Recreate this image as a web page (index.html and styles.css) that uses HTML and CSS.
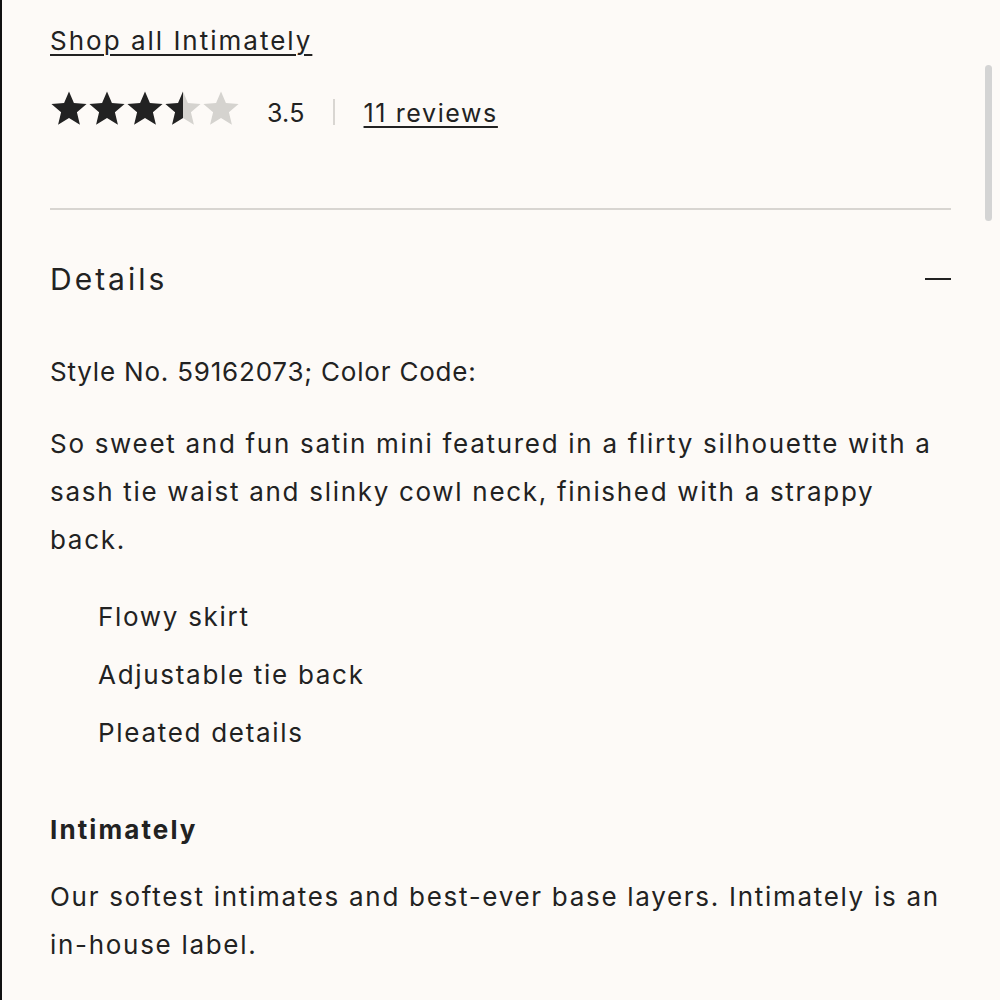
FILE: index.html
```html
<!DOCTYPE html>
<html>
<head>
<meta charset="utf-8">
<link rel="stylesheet" href="styles.css">
</head>
<body>
<div class="page">
  <a class="shop-link" href="#">Shop all Intimately</a>
  <div class="rating">
    <div class="stars">
      <svg class="star" viewBox="0 0 24 24"><path d="M12 1.5l3.1 7.4 8 .6-6.1 5.2 1.9 7.8L12 18.3l-6.9 4.2L7 14.7.9 9.5l8-.6z" fill="#222"/></svg>
      <svg class="star" viewBox="0 0 24 24"><path d="M12 1.5l3.1 7.4 8 .6-6.1 5.2 1.9 7.8L12 18.3l-6.9 4.2L7 14.7.9 9.5l8-.6z" fill="#222"/></svg>
      <svg class="star" viewBox="0 0 24 24"><path d="M12 1.5l3.1 7.4 8 .6-6.1 5.2 1.9 7.8L12 18.3l-6.9 4.2L7 14.7.9 9.5l8-.6z" fill="#222"/></svg>
      <svg class="star" viewBox="0 0 24 24"><defs><clipPath id="half"><rect x="0" y="0" width="12" height="24"/></clipPath></defs><path d="M12 1.5l3.1 7.4 8 .6-6.1 5.2 1.9 7.8L12 18.3l-6.9 4.2L7 14.7.9 9.5l8-.6z" fill="#d5d3cf"/><path d="M12 1.5l3.1 7.4 8 .6-6.1 5.2 1.9 7.8L12 18.3l-6.9 4.2L7 14.7.9 9.5l8-.6z" fill="#222" clip-path="url(#half)"/></svg>
      <svg class="star" viewBox="0 0 24 24"><path d="M12 1.5l3.1 7.4 8 .6-6.1 5.2 1.9 7.8L12 18.3l-6.9 4.2L7 14.7.9 9.5l8-.6z" fill="#d5d3cf"/></svg>
    </div>
    <span class="score">3.5</span>
    <span class="sep"></span>
    <a class="reviews" href="#">11 reviews</a>
  </div>
  <hr class="divider">
  <div class="accordion-head">
    <h2 class="accordion-title">Details</h2>
    <span class="minus"></span>
  </div>
  <div class="details">
    <p class="style-no">Style No. 59162073; Color Code:</p>
    <p class="desc">So sweet and fun satin mini featured in a flirty silhouette with a sash tie waist and slinky cowl neck, finished with a strappy back.</p>
    <ul class="features">
      <li>Flowy skirt</li>
      <li>Adjustable tie back</li>
      <li>Pleated details</li>
    </ul>
    <h3 class="brand">Intimately</h3>
    <p class="desc">Our softest intimates and best-ever base layers. Intimately is an in-house label.</p>
  </div>
</div>
<div class="scrollbar"></div>
</body>
</html>
```

FILE: styles.css
```css
html, body {
  margin: 0;
  padding: 0;
}
body {
  background: #fdfaf7;
  border-left: 2px solid #111;
  min-height: 1000px;
  box-sizing: border-box;
  font-family: "Inter", "Liberation Sans", sans-serif;
  color: #222;
  overflow: hidden;
}
.page {
  padding: 24px 49px 0 48px;
  width: 901px;
}
.shop-link {
  display: inline-block;
  font-size: 26px;
  letter-spacing: 2px;
  color: #222;
  text-decoration: underline;
  text-underline-offset: 4px;
  text-decoration-thickness: 2px;
  line-height: 34px;
}
.rating {
  display: flex;
  align-items: center;
  margin-top: 30px;
  height: 40px;
}
.stars {
  display: flex;
}
.star {
  width: 38px;
  height: 38px;
  display: block;
}
.score {
  font-size: 25px;
  margin-left: 27px;
  letter-spacing: 0.2px;
  padding-top: 9px;
}
.sep {
  width: 2px;
  height: 26px;
  background: #d9d6d2;
  margin: 8px 29px 0 28px;
}
.reviews {
  font-size: 25px;
  color: #222;
  letter-spacing: 1.6px;
  text-decoration: underline;
  text-underline-offset: 4px;
  text-decoration-thickness: 2px;
  padding-top: 9px;
}
.divider {
  border: 0;
  height: 2px;
  background: #d8d5d1;
  margin: 80px 0 0 0;
}
.accordion-head {
  display: flex;
  justify-content: space-between;
  align-items: center;
  height: 138px;
}
.accordion-title {
  margin: 0;
  font-weight: 400;
  font-size: 30px;
  letter-spacing: 3px;
}
.minus {
  width: 26px;
  height: 2px;
  background: #222;
}
.details {
  padding-right: 10px;
}
.details p {
  margin: 0;
}
.style-no,
.desc {
  font-size: 26px;
  line-height: 48px;
  letter-spacing: 1.7px;
}
.style-no {
  letter-spacing: 0.8px;
  margin-bottom: 24px !important;
}
.features {
  list-style: none;
  margin: 24px 0 0 0;
  padding: 0 0 0 48px;
}
.features li {
  font-size: 26px;
  line-height: 58px;
  letter-spacing: 1.7px;
}
.brand {
  margin: 44px 0 19px 0;
  font-size: 26px;
  font-weight: 700;
  letter-spacing: 2.1px;
  line-height: 48px;
}
.scrollbar {
  position: fixed;
  right: 8px;
  top: 65px;
  width: 7px;
  height: 156px;
  border-radius: 4px;
  background: #d4d4d4;
}
```
